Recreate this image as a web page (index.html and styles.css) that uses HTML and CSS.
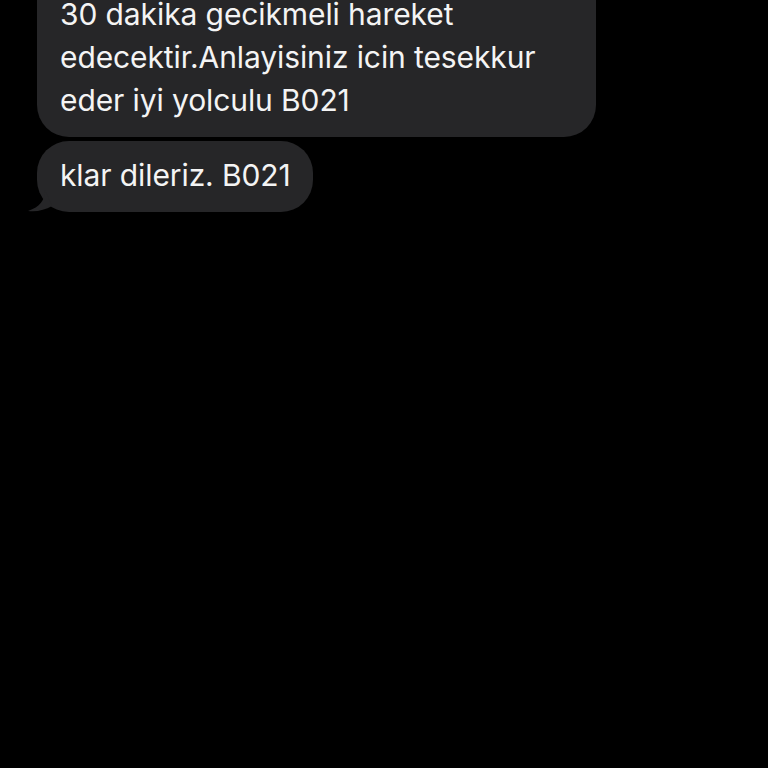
FILE: index.html
```html
<!DOCTYPE html>
<html lang="tr">
<head>
<meta charset="utf-8">
<link rel="stylesheet" href="styles.css">
</head>
<body>
<div class="thread">
  <div class="bubble first">30 dakika gecikmeli hareket<br>edecektir.Anlayisiniz icin tesekkur<br>eder iyi yolculu B021</div>
  <div class="bubble last">klar dileriz. B021
    <svg class="tail" width="24" height="22" viewBox="0 0 24 22"><path d="M17 0 C17 10 12 17 0 21 C9 22 17 20 24 16 Z" fill="#262628"/></svg>
  </div>
</div>
</body>
</html>
```
FILE: styles.css
```css
html, body {
  margin: 0;
  padding: 0;
  background: #000;
  width: 768px;
  height: 768px;
  overflow: hidden;
}
.thread {
  display: flex;
  flex-direction: column;
  align-items: flex-start;
  gap: 4px;
  padding-left: 37px;
  margin-top: -78px;
}
.bubble {
  position: relative;
  background: #262628;
  color: #f4f4f4;
  font-family: Inter, "Noto Sans", sans-serif;
  font-size: 30px;
  line-height: 43px;
  border-radius: 32px;
  padding: 14px 23px;
  letter-spacing: -0.1px;
}
.first {
  width: 513px;
  padding-top: 71px;
  padding-bottom: 15px;
}
.last {
  padding-top: 13px;
  padding-bottom: 15px;
  padding-right: 22px;
}
.tail {
  position: absolute;
  left: -9px;
  bottom: 0;
}
```
